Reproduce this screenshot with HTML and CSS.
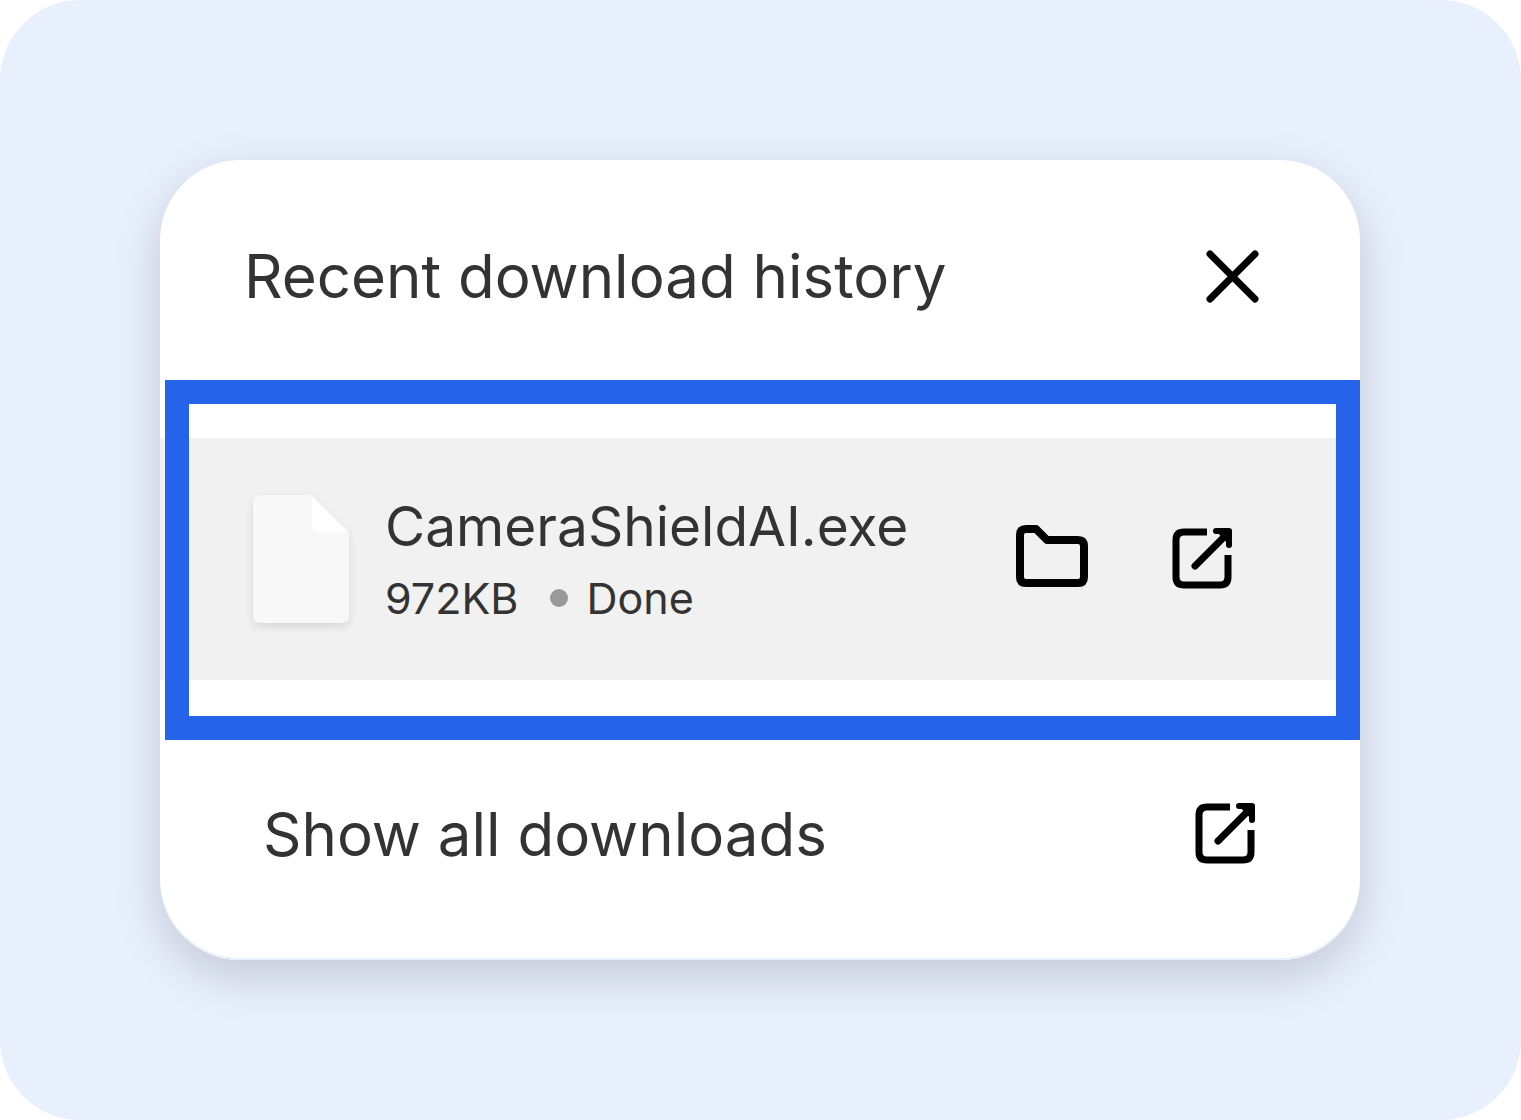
FILE: index.html
```html
<!DOCTYPE html>
<html lang="en">

<head>
    <meta charset="UTF-8">
    <meta name="viewport" content="width=device-width, initial-scale=1.0">
    <title>Recent download history</title>
    <link rel="stylesheet" href="styles.css">
</head>

<body>
    <main class="stage">
        <section class="card">
            <header class="card-header">
                <h1>Recent download history</h1>
                <button type="button" class="icon-btn" aria-label="Close">
                    <svg width="54" height="54" viewBox="0 0 54 54">
                        <path d="M4 5L49 50M49 5L4 50" stroke-width="7" stroke-linecap="round" />
                    </svg>
                </button>
            </header>

            <div class="highlight">
                <div class="download">
                    <svg class="file-icon" width="96" height="129" viewBox="0 0 96 129">
                        <path d="M8 0H58L96 38V121Q96 128 88 128H8Q0 128 0 121V8Q0 0 8 0Z" fill="#f8f8f8" />
                        <path d="M59 1L95 37H66Q59 37 59 30Z" fill="#fff" />
                    </svg>
                    <div class="file-info">
                        <p class="file-name">CameraShieldAI.exe</p>
                        <p class="file-meta"><span>972KB</span><i class="dot"></i><span>Done</span></p>
                    </div>
                    <div class="actions">
                        <button type="button" class="icon-btn" aria-label="Show in folder">
                            <svg width="74" height="68" viewBox="0 0 74 68">
                                <path d="M11 4H21L32 15H63Q69 15 69 21V52Q69 58 63 58H11Q5 58 5 52V10Q5 4 11 4Z" stroke-width="8" stroke-linejoin="round" />
                            </svg>
                        </button>
                        <button type="button" class="icon-btn" aria-label="Open file">
                            <svg width="62" height="62" viewBox="0 0 62 62">
                                <path d="M35 4H12Q4 4 4 12V49Q4 57 12 57H48Q56 57 56 49V27" stroke-width="7" />
                                <path d="M23 38L54 7" stroke-width="7" stroke-linecap="round" />
                                <path d="M44 3H57V17" stroke-width="6" stroke-linecap="round" stroke-linejoin="round" />
                                <path d="M44 3H57V17Z" fill="#000" stroke="none" />
                            </svg>
                        </button>
                    </div>
                </div>
            </div>

            <a href="#" class="card-footer">
                <span>Show all downloads</span>
                <svg width="62" height="62" viewBox="0 0 62 62">
                    <path d="M35 4H12Q4 4 4 12V49Q4 57 12 57H48Q56 57 56 49V27" stroke-width="7" />
                    <path d="M23 38L54 7" stroke-width="7" stroke-linecap="round" />
                    <path d="M44 3H57V17" stroke-width="6" stroke-linecap="round" stroke-linejoin="round" />
                    <path d="M44 3H57V17Z" fill="#000" stroke="none" />
                </svg>
            </a>
        </section>
    </main>
</body>

</html>
```
FILE: styles.css
```css
* {
    box-sizing: border-box;
}

body {
    margin: 0;
    background-color: #fff;
    color: #333;
    font-family: Inter, "Open Sans", sans-serif;
}

h1,
p {
    margin: 0;
}

svg {
    display: block;
    flex-shrink: 0;
    fill: none;
    stroke: #000;
}

.stage {
    min-height: 100vh;
    padding: 160px 161px 160px 160px;
    border-radius: 80px;
    background-color: #e8effd;
}

.card {
    border-radius: 80px;
    background-color: #fff;
    box-shadow: inset 0 -2px 0 #e8effd, 0 16px 48px rgba(0, 0, 0, 0.16);
}

.card-header,
.card-footer {
    display: flex;
    align-items: center;
    justify-content: space-between;
    height: 220px;
    font-size: 60px;
    line-height: 72px;
}

.card-header {
    padding: 12px 100px 0 84px;
}

.card-footer {
    padding: 0 103px 32px;
    color: inherit;
    text-decoration: none;
}

h1 {
    font-size: inherit;
    font-weight: 400;
}

.icon-btn {
    padding: 0;
    border: none;
    background: none;
    cursor: pointer;
}

/* blue frame sits on top of the grey row */
.highlight {
    position: relative;
    padding: 58px 0 60px;
}

.highlight::after {
    content: "";
    position: absolute;
    inset: 0 0 0 5px;
    border: 24px solid #2563eb;
    pointer-events: none;
}

.download {
    display: flex;
    align-items: center;
    height: 242px;
    padding: 0 126px 0 93px;
    background-color: #f1f1f1;
}

.file-icon {
    stroke: none;
    filter: drop-shadow(0 4px 4px rgba(0, 0, 0, 0.1));
}

.file-info {
    flex: 1;
    margin-left: 36px;
    padding-top: 6px;
}

.file-name {
    font-size: 55px;
    line-height: 72px;
}

.file-meta {
    display: flex;
    align-items: center;
    font-size: 43px;
    line-height: 72px;
}

.dot {
    width: 18px;
    height: 18px;
    margin: 0 18px 0 32px;
    border-radius: 50%;
    background-color: #999;
}

.actions {
    display: flex;
    align-items: center;
    gap: 83px;
}
```
